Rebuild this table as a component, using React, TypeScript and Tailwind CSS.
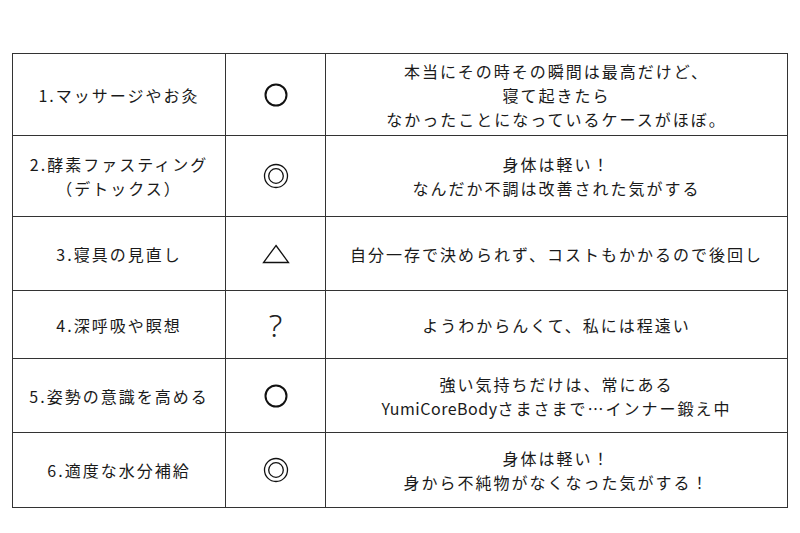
const Circle = () => (
  <svg width="26" height="26" viewBox="0 0 26 26">
    <circle cx="13" cy="13" r="10.5" fill="none" stroke="#111" strokeWidth="2" />
  </svg>
);

const DoubleCircle = () => (
  <svg width="28" height="28" viewBox="0 0 28 28">
    <circle cx="14" cy="14" r="11.5" fill="none" stroke="#111" strokeWidth="1.3" />
    <circle cx="14" cy="14" r="7.3" fill="none" stroke="#111" strokeWidth="1.3" />
  </svg>
);

const Triangle = () => (
  <svg width="28" height="20" viewBox="0 0 28 20">
    <path d="M14 1.5 L26.5 18.5 L1.5 18.5 Z" fill="none" stroke="#111" strokeWidth="1.3" strokeLinejoin="miter" />
  </svg>
);

const Question = () => (
  <span className="text-[32px] leading-none font-['Noto_Sans',sans-serif] font-light tracking-normal text-[#222]">?</span>
);

const rows = [
  {
    h: "h-[82px]",
    name: ["1.マッサージやお灸"],
    mark: <Circle />,
    note: ["本当にその時その瞬間は最高だけど、", "寝て起きたら", "なかったことになっているケースがほぼ。"],
  },
  {
    h: "h-[81px]",
    name: ["2.酵素ファスティング", "（デトックス）"],
    mark: <DoubleCircle />,
    note: ["身体は軽い！", "なんだか不調は改善された気がする"],
  },
  {
    h: "h-[74px]",
    name: ["3.寝具の見直し"],
    mark: <Triangle />,
    note: ["自分一存で決められず、コストもかかるので後回し"],
  },
  {
    h: "h-[68px]",
    name: ["4.深呼吸や瞑想"],
    mark: <Question />,
    note: ["ようわからんくて、私には程遠い"],
  },
  {
    h: "h-[74px]",
    name: ["5.姿勢の意識を高める"],
    mark: <Circle />,
    note: [
      "強い気持ちだけは、常にある",
      <>
        <span className="tracking-[0.5px]">YumiCoreBody</span>さまさまで…インナー鍛え中
      </>,
    ],
  },
  {
    h: "h-[74px]",
    name: ["6.適度な水分補給"],
    mark: <DoubleCircle />,
    note: ["身体は軽い！", "身から不純物がなくなった気がする！"],
  },
];

export default function App() {
  return (
    <div className="w-[800px] h-[533px] bg-white pt-[53px] pl-[12px] font-['Noto_Sans_CJK_JP',sans-serif] text-[16px] leading-[24px] tracking-[2px] text-[#1a1a1a]">
      <div className="w-[776px] border-[1.5px] border-[#333]">
        {rows.map((r, i) => (
          <div
            key={i}
            className={`grid grid-cols-[213px_100px_1fr] ${r.h} ${i < rows.length - 1 ? "border-b-[1.5px] border-[#333]" : ""}`}
          >
            <div className="flex flex-col items-center justify-center text-center border-r-[1.5px] border-[#333]">
              {r.name.map((t, j) => (
                <div key={j}>{t}</div>
              ))}
            </div>
            <div className="flex items-center justify-center border-r-[1.5px] border-[#333]">{r.mark}</div>
            <div className="flex flex-col items-center justify-center text-center">
              {r.note.map((t, j) => (
                <div key={j}>{t}</div>
              ))}
            </div>
          </div>
        ))}
      </div>
    </div>
  );
}
